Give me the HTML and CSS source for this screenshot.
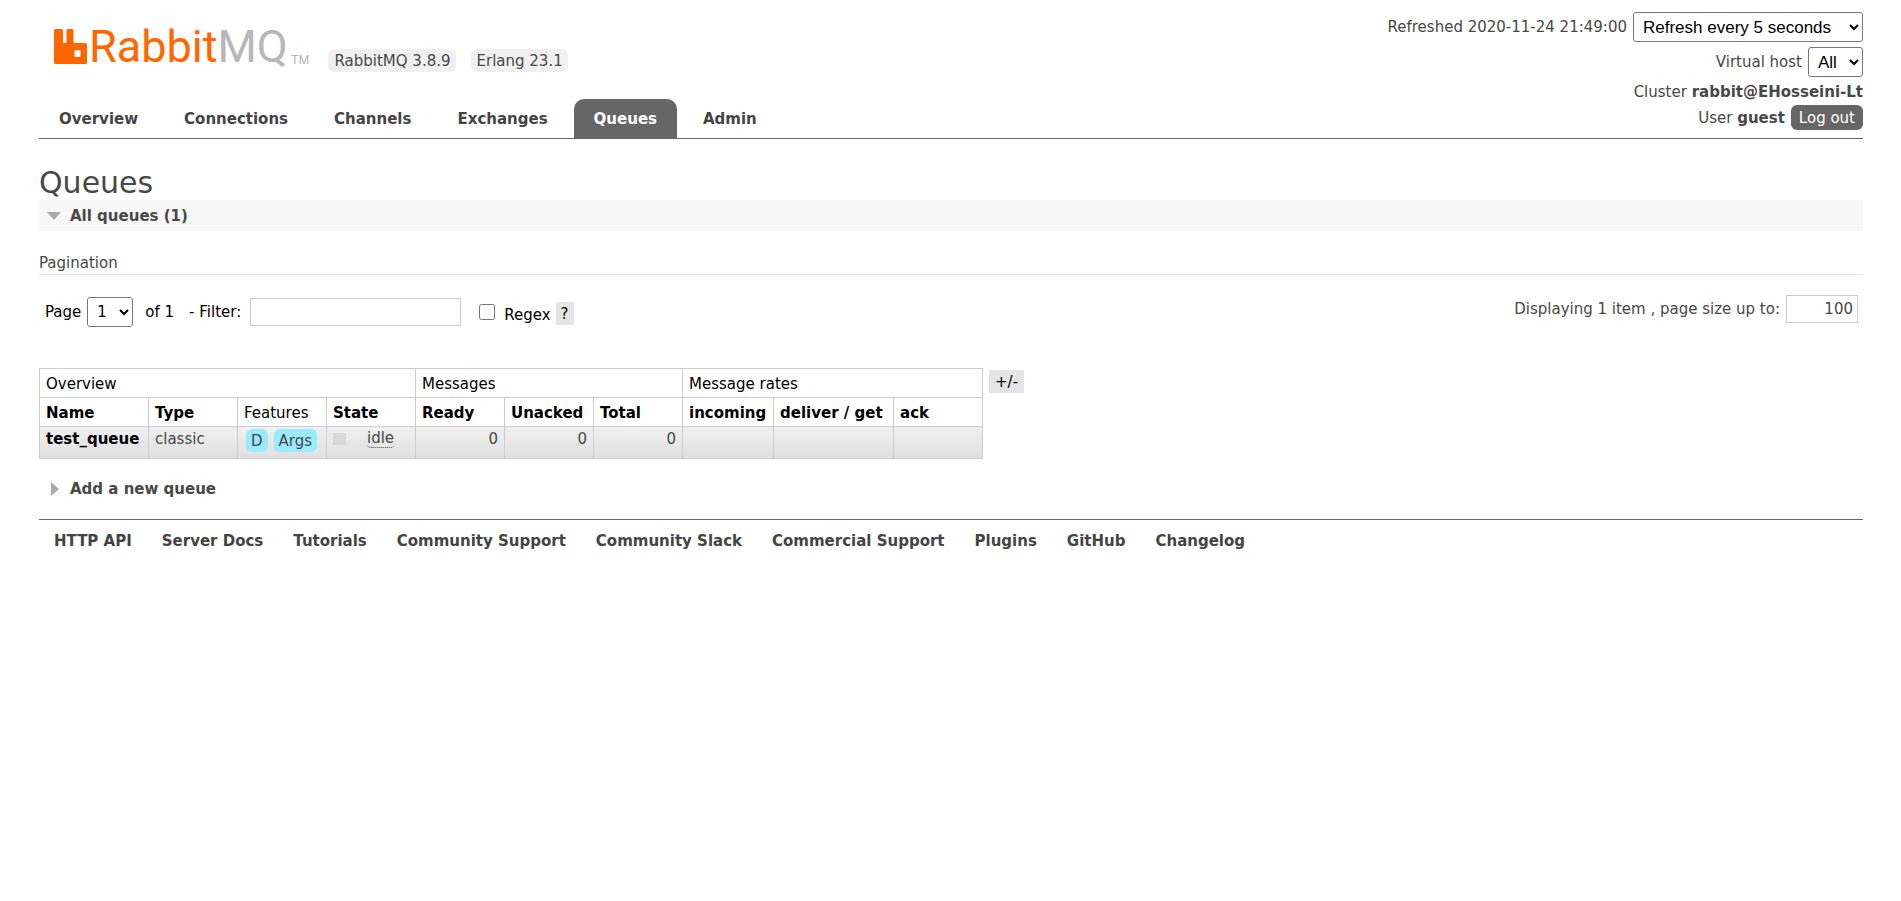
FILE: index.html
```html
<!DOCTYPE html>
<html lang="en">
<head>
<meta charset="utf-8">
<title>RabbitMQ Management</title>
<link rel="stylesheet" href="styles.css">
</head>
<body>
<header class="header">
  <div class="brand-area">
    <div class="brand">
      <a class="logo" href="#">
        <svg class="logo-mark" viewBox="0 0 33 35" aria-hidden="true"><path fill="#f60" fill-rule="evenodd" d="M1.500 0H7.500Q9 0 9 1.500V12.500Q9 14 10.500 14H11Q12.500 14 12.500 12.500V1.500Q12.500 0 14 0H18Q19.500 0 19.500 1.500V12.500Q19.500 14 21 14H31.500Q33 14 33 15.500V33.500Q33 35 31.500 35H1.500Q0 35 0 33.500V1.500Q0 0 1.500 0ZM21.500 21Q20.500 21 20.500 22V27Q20.500 28 21.500 28H25.500Q26.500 28 26.500 27V22Q26.500 21 25.500 21Z"/></svg>
        <span class="logo-text">Rabbit<span class="logo-mq">MQ</span></span><span class="logo-tm">TM</span>
      </a>
      <span class="version">RabbitMQ 3.8.9</span>
      <span class="version">Erlang 23.1</span>
    </div>
    <nav class="tabs">
      <a href="#">Overview</a>
      <a href="#">Connections</a>
      <a href="#">Channels</a>
      <a href="#">Exchanges</a>
      <a class="selected" href="#" aria-current="page">Queues</a>
      <a href="#">Admin</a>
    </nav>
  </div>
  <div class="status">
    <div class="status-row"><label for="refresh">Refreshed 2020-11-24 21:49:00</label><select id="refresh" class="refresh"><option>Refresh every 5 seconds</option></select></div>
    <div class="status-row"><label for="vhost">Virtual host</label><select id="vhost" class="vhost"><option>All</option></select></div>
    <div class="cluster">Cluster <b>rabbit@EHosseini-Lt</b></div>
    <div class="status-row"><span>User <b>guest</b></span><button class="logout" type="button">Log out</button></div>
  </div>
</header>
<main>
  <h1>Queues</h1>
  <h2 class="section open"><svg class="arrow-down" viewBox="0 0 14 8" aria-hidden="true"><path fill="#aaa" d="M0 0H14L7 8Z"/></svg>All queues (1)</h2>
  <h3>Pagination</h3>
  <form class="filters">
    <label for="page">Page</label>
    <select id="page" class="page"><option>1</option></select>
    <span class="of">of 1</span>
    <label class="filter-label" for="filter">- Filter:</label>
    <input id="filter" class="filter" type="text">
    <input id="regex" class="regex" type="checkbox">
    <label class="regex-label" for="regex">Regex</label>
    <button class="help" type="button">?</button>
    <span class="paging"><label for="size">Displaying 1 item , page size up to:</label><input id="size" class="size" type="text" value="100"></span>
  </form>
  <div class="listing">
    <table>
      <colgroup><col class="c-name"><col class="c-std"><col class="c-std"><col class="c-std"><col class="c-std"><col class="c-std"><col class="c-std"><col class="c-in"><col class="c-get"><col class="c-std"></colgroup>
      <thead>
        <tr class="groups"><th colspan="4">Overview</th><th colspan="3">Messages</th><th colspan="3">Message rates</th></tr>
        <tr><th>Name</th><th>Type</th><th class="plain">Features</th><th>State</th><th>Ready</th><th>Unacked</th><th>Total</th><th>incoming</th><th>deliver / get</th><th>ack</th></tr>
      </thead>
      <tbody>
        <tr><td><a class="queue" href="#">test_queue</a></td><td>classic</td><td class="features"><span class="tag">D</span><span class="tag">Args</span></td><td><span class="state"><i class="square"></i><span class="idle">idle</span></span></td><td class="num">0</td><td class="num">0</td><td class="num">0</td><td></td><td></td><td></td></tr>
      </tbody>
    </table>
    <button class="help" type="button">+/-</button>
  </div>
  <h2 class="section"><svg class="arrow-right" viewBox="0 0 8 14" aria-hidden="true"><path fill="#aaa" d="M0 0L8 7L0 14Z"/></svg>Add a new queue</h2>
</main>
<footer class="footer">
  <a href="#">HTTP API</a>
  <a href="#">Server Docs</a>
  <a href="#">Tutorials</a>
  <a href="#">Community Support</a>
  <a href="#">Community Slack</a>
  <a href="#">Commercial Support</a>
  <a href="#">Plugins</a>
  <a href="#">GitHub</a>
  <a href="#">Changelog</a>
</footer>
</body>
</html>
```
FILE: styles.css
```css
* { box-sizing: border-box; }
body { margin: 0; padding: 12px 38px 0 39px; background: #fff; color: #484848; font: 15px/20px Verdana, "DejaVu Sans", sans-serif; }
a { color: #444; text-decoration: none; font-weight: bold; }
button, input { font-family: inherit; font-size: 15px; }
select { height: 30px; padding: 0 5px; border: 1px solid #767676; border-radius: 3px; background: #fff; color: #000; font: 17px Arial, "Liberation Sans", sans-serif; }

.header { display: flex; justify-content: space-between; border-bottom: 1px solid #666; }
.brand-area { display: flex; flex-direction: column; justify-content: space-between; }
.brand { display: flex; align-items: flex-end; gap: 15px; padding: 10px 0 0 15px; }
.logo { display: flex; align-items: flex-end; height: 50px; margin-right: 4px; padding-bottom: 8px; font-weight: normal; }
.logo-mark { width: 33px; height: 35px; margin-right: 2px; }
.logo-text { color: #f60; font: 45px/35px "Roboto", sans-serif; }
.logo-mq { color: #b7b7b7; }
.logo-tm { margin-left: 3px; color: #b7b7b7; font: 13px/9px "Liberation Sans", sans-serif; }
.version { padding: 2px 5px 1px 6px; border-radius: 6px; background: #f0f0f0; }
.tabs { display: flex; gap: 6px; }
.tabs a { padding: 10px 20px 9px; border-radius: 10px 10px 0 0; }
.tabs .selected { background: #666; color: #fff; }

.status { display: flex; flex-direction: column; align-items: flex-end; gap: 3px; padding-bottom: 8px; }
.status-row { display: flex; align-items: center; gap: 6px; }
.status-row:first-child { margin-bottom: 2px; }
.refresh { width: 230px; }
.vhost { width: 55px; }
.cluster { margin-top: 2px; }
.logout { height: 25px; padding: 0 8px; border: 0; border-radius: 6px; background: #666; color: #fff; }

h1 { margin: 26px 0 0; font-size: 30px; line-height: 35px; font-weight: normal; }
.section { display: flex; align-items: center; margin: 0; padding: 6px 8px 5px; font-size: 15px; line-height: 20px; }
.open { background: #f7f7f7; }
.arrow-down { width: 14px; height: 8px; margin-right: 9px; }
.arrow-right { width: 8px; height: 14px; margin: 0 11px 0 4px; }
h3 { margin: 22px 0 0; padding-bottom: 1px; border-bottom: 1px solid #e4e4e4; font-size: 15px; line-height: 20px; font-weight: normal; }

.filters { display: flex; align-items: center; padding: 22px 5px 0 6px; color: #000; }
.page { width: 46px; margin: 0 12px 0 6px; font-family: Verdana, "DejaVu Sans", sans-serif; font-size: 15px; }
.filter-label { margin: 0 9px 0 15px; }
.filter, .size { height: 28px; padding: 0 4px; border: 1px solid #ccc; background: #fff; color: #000; }
.filter { width: 211px; }
.regex { width: 16px; height: 16px; margin: 0 9px 0 18px; }
.regex-label { margin-top: 5px; }
.help { height: 23px; padding: 0 6px; border: 0; background: #e4e4e4; color: #000; }
.filters .help { margin: 3px 0 0 5px; padding: 0 5px; }
.paging { display: flex; align-items: center; gap: 6px; margin: -7px 0 0 auto; color: #484848; }
.size { width: 72px; text-align: right; color: #484848; }

.listing { display: flex; align-items: flex-start; gap: 6px; margin-top: 41px; }
.listing .help { margin-top: 2px; }
table { width: 944px; border-collapse: collapse; table-layout: fixed; }
.c-name { width: 109px; }
.c-std { width: 89px; }
.c-in { width: 91px; }
.c-get { width: 120px; }
th, td { padding: 5px 6px 3px; border: 1px solid #ccc; text-align: left; white-space: nowrap; vertical-align: top; }
th { color: #000; }
.groups th, .plain { font-weight: normal; }
tbody tr { height: 32px; background: linear-gradient(#f0f0f0, #dfdfdf); }
tbody td { padding: 2px 6px; }
.queue { color: #000; }
tbody .features { padding: 2px 8px; }
.tag { display: inline-block; margin-right: 6px; padding: 2px 5px 1px; border-radius: 6px; background: #99ebff; }
.tag:last-child { margin-right: 0; }
.state { display: flex; align-items: center; gap: 21px; }
.square { width: 13px; height: 12px; background: #d8d8d8; }
.idle { height: 19px; line-height: 18px; border-bottom: 1px dotted #484848; border-radius: 4px; }
.num { text-align: right; }
.listing + .section { padding-top: 20px; }

.footer { display: flex; flex-wrap: wrap; gap: 30px; margin-top: 15px; padding: 11px 15px; border-top: 1px solid #666; }
```
